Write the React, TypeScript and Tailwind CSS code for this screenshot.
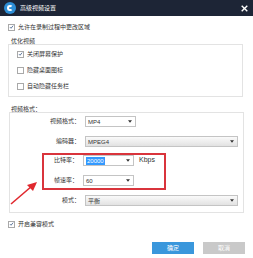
import React from "react";

function Check({ checked }: { checked?: boolean }) {
  return (
    <span className="w-[7px] h-[7px] border border-[#a9a9a9] bg-white flex items-center justify-center shrink-0">
      {checked && (
        <svg viewBox="0 0 8 8" className="w-[6px] h-[6px]">
          <path d="M1.5 4.2 L3.3 6 L6.6 1.8" fill="none" stroke="#3b5a87" strokeWidth="1.3" />
        </svg>
      )}
    </span>
  );
}

function CheckRow({ label, checked }: { label: string; checked?: boolean }) {
  return (
    <div className="flex items-center gap-[3px] h-[8px]">
      <Check checked={checked} />
      <span className="leading-[8px]">{label}</span>
    </div>
  );
}

function Select({
  value,
  width,
  gray,
  selected,
}: {
  value: string;
  width: string;
  gray?: boolean;
  selected?: boolean;
}) {
  return (
    <div
      className={`h-[11px] ${width} border border-[#c4c4c4] flex items-center justify-between pl-[2px] pr-[3px] ${
        gray ? "bg-gradient-to-b from-[#fafafa] to-[#e2e2e2]" : "bg-white"
      }`}
    >
      <span
        className={`leading-[8px] ${selected ? "bg-[#3399ff] text-white px-[1px]" : ""}`}
      >
        {value}
      </span>
      <svg viewBox="0 0 6 4" className="w-[4px] h-[3px]">
        <path d="M0 0 H6 L3 4 Z" fill="#333" />
      </svg>
    </div>
  );
}

export default function App() {
  const font = {
    fontFamily: '"Liberation Sans", "Noto Sans CJK SC", sans-serif',
  };
  return (
    <div
      className="w-[253px] h-[258px] bg-white relative overflow-hidden text-[6px] text-[#333]"
      style={font}
    >
      {/* title bar */}
      <div className="h-[16px] bg-[#1d2536] flex items-center pl-[4px] pr-[5px]">
        <div className="w-[12px] h-[12px] rounded-full bg-[#2d8ed6] flex items-center justify-center">
          <div className="w-[6px] h-[6px] rounded-full border-[2px] border-white border-r-transparent" />
        </div>
        <span className="ml-[4px] text-white text-[6px] leading-[8px]">高级视频设置</span>
        <svg viewBox="0 0 10 10" className="ml-auto w-[7px] h-[7px]">
          <path d="M1 1 L9 9 M9 1 L1 9" stroke="white" strokeWidth="2" />
        </svg>
      </div>

      <div className="px-[8px]">
        <div className="mt-[7px]">
          <CheckRow label="允许在录制过程中更改区域" checked />
        </div>

        <div className="mt-[7px] pl-[3px] h-[6px] leading-[6px]">优化视频</div>
        <div className="mr-[2px] border border-[#e3e3e3] pl-[8px] pt-[5px] pb-[6px] flex flex-col gap-[8px]">
          <CheckRow label="关闭屏幕保护" checked />
          <CheckRow label="隐藏桌面图标" />
          <CheckRow label="自动隐藏任务栏" />
        </div>

        <div className="mt-[10px] pl-[3px] h-[5px] leading-[5px]">视频格式：</div>
        <div className="ml-[1px] mr-[1px] border border-[#e3e3e3] pt-[3px] pb-[6px] pr-[5px]">
          <div className="flex items-center">
            <span className="w-[70px] text-right">视频格式：</span>
            <div className="ml-[5px]">
              <Select value="MP4" width="w-[51px]" />
            </div>
          </div>
          <div className="flex items-center mt-[9px]">
            <span className="w-[70px] text-right">编码器：</span>
            <div className="ml-[5px] flex-1">
              <Select value="MPEG4" width="w-full" gray />
            </div>
          </div>

          <div className="mt-[6px] ml-[32px] w-[124px] border-2 border-[#d9343c] pb-[2px]">
            <div className="flex items-center">
              <span className="w-[34px] text-right">比特率：</span>
              <div className="ml-[5px]">
                <Select value="20000" width="w-[51px]" selected />
              </div>
              <span className="ml-[5px] text-[7px]">Kbps</span>
            </div>
            <div className="flex items-center mt-[9px]">
              <span className="w-[34px] text-right">帧速率：</span>
              <div className="ml-[5px]">
                <Select value="60" width="w-[51px]" />
              </div>
            </div>
          </div>

          <div className="flex items-center mt-[5px]">
            <span className="w-[70px] text-right">模式：</span>
            <div className="ml-[5px] flex-1">
              <Select value="平衡" width="w-full" gray />
            </div>
          </div>
        </div>

        <div className="mt-[7px]">
          <CheckRow label="开启兼容模式" checked />
        </div>

        <div className="mt-[14px] flex justify-end gap-[9px]">
          <div className="w-[42px] h-[12px] bg-[#3a97dc] text-white flex items-center justify-center">
            确定
          </div>
          <div className="w-[42px] h-[12px] bg-[#c9c9c9] text-white flex items-center justify-center">
            取消
          </div>
        </div>
      </div>

      {/* red annotation arrow */}
      <svg className="absolute left-0 top-[178px] w-[45px] h-[30px]" viewBox="0 178 45 30">
        <path d="M11 204 L32 186" stroke="#e0282e" strokeWidth="1.6" />
        <path d="M37 182 L27 185 L33 191 Z" fill="#e0282e" />
      </svg>
    </div>
  );
}
